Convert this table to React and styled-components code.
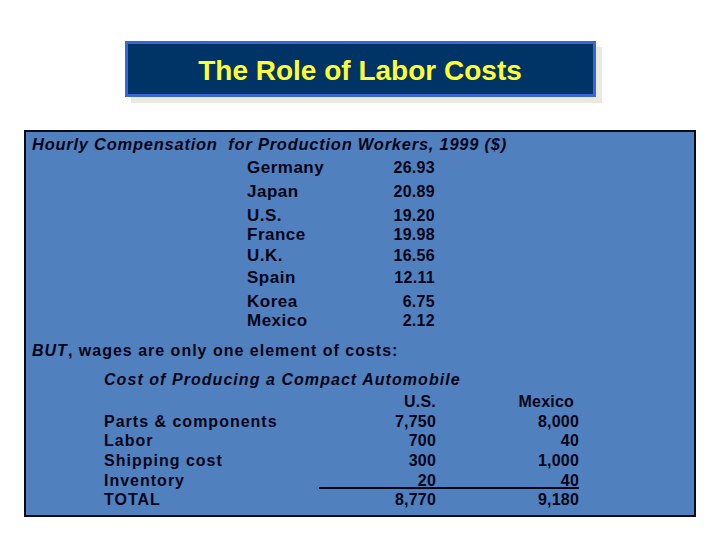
import React from "react";
import styled, { createGlobalStyle } from "styled-components";

const Global = createGlobalStyle`
  html, body { margin: 0; padding: 0; background: #ffffff; }
  body { font-family: "Liberation Sans", Arial, sans-serif; }
`;

const Page = styled.div`
  width: 720px;
  height: 540px;
  display: flex;
  flex-direction: column;
  align-items: center;
  padding-top: 41px;
  box-sizing: border-box;
`;

const TitleBox = styled.div`
  width: 471px;
  height: 56px;
  box-sizing: border-box;
  background: #003366;
  border: 3px solid #3a66d6;
  box-shadow: 6px 6px 0 #ebe9dc;
  display: flex;
  align-items: center;
  justify-content: center;
  padding-top: 3px;
`;

const Title = styled.h1`
  margin: 0;
  color: #ffff33;
  font-size: 28px;
  font-weight: bold;
  font-family: "Liberation Sans", Arial, sans-serif;
  line-height: 1;
`;

const Panel = styled.div`
  margin-top: 33px;
  width: 672px;
  height: 387px;
  box-sizing: border-box;
  background: #5080be;
  border: 2px solid #0a0a1a;
  padding: 2px 6px 0 6px;
  color: #050518;
  font-size: 16px;
  font-weight: bold;
  display: flex;
  flex-direction: column;
`;

const Line = styled.div`
  line-height: 20px;
  height: 20px;
  margin-top: ${(p) => (p.$pitch ? p.$pitch - 20 : 0)}px;
  padding-left: ${(p) => p.$indent || 0}px;
  font-style: ${(p) => (p.$italic ? "italic" : "normal")};
  font-size: ${(p) => p.$size || 16}px;
  letter-spacing: ${(p) => p.$ls ?? 0.6}px;
  white-space: nowrap;
`;

const CountryRow = styled.div`
  display: grid;
  grid-template-columns: 215px 120px 68px;
  line-height: 20px;
  height: 20px;
  margin-top: ${(p) => p.$pitch - 20}px;
`;

const Label = styled.span`
  grid-column: ${(p) => p.$col || 2};
  font-size: 17px;
  letter-spacing: ${(p) => p.$ls ?? 0.5}px;
  white-space: nowrap;
`;

const Num = styled.span`
  grid-column: ${(p) => p.$col};
  text-align: right;
  letter-spacing: 0.3px;
  padding-right: ${(p) => p.$pr || 0}px;
`;

const CostRow = styled.div`
  display: grid;
  grid-template-columns: 215px 117px 143px;
  padding-left: 72px;
  line-height: 20px;
  margin-top: ${(p) => p.$pitch - 20}px;
`;

const CostCell = styled.span`
  text-align: ${(p) => (p.$num ? "right" : "left")};
  letter-spacing: ${(p) => (p.$num ? 0.2 : 1)}px;
  white-space: nowrap;
  padding-right: ${(p) => p.$pr || 0}px;
  padding-top: ${(p) => (p.$total ? (p.$num ? 1 : 3) : 0)}px;
  border-top: ${(p) => (p.$total && p.$num ? "2px solid #050518" : "none")};
`;

const countries = [
  ["Germany", "26.93", 24],
  ["Japan", "20.89", 24],
  ["U.S.", "19.20", 24],
  ["France", "19.98", 19],
  ["U.K.", "16.56", 21],
  ["Spain", "12.11", 22],
  ["Korea", "6.75", 24],
  ["Mexico", "2.12", 19],
];

const costs = [
  ["Parts & components", "7,750", "8,000", 20],
  ["Labor", "700", "40", 19],
  ["Shipping cost", "300", "1,000", 20],
  ["Inventory", "20", "40", 20],
];

export default function App() {
  return (
    <>
      <Global />
      <Page>
        <TitleBox>
          <Title>The Role of Labor Costs</Title>
        </TitleBox>
        <Panel>
          <Line $italic $size={16.5} $ls={0.75}>
            Hourly Compensation&nbsp; for Production Workers, 1999 ($)
          </Line>
          {countries.map(([c, v, p]) => (
            <CountryRow key={c} $pitch={p}>
              <Label $col={2}>{c}</Label>
              <Num $col={3}>{v}</Num>
            </CountryRow>
          ))}
          <Line $pitch={30} $ls={1}>
            <i>BUT</i>, wages are only one element of costs:
          </Line>
          <Line $pitch={29} $indent={72} $italic $ls={1.05}>
            Cost of Producing a Compact Automobile
          </Line>
          <CostRow $pitch={22}>
            <CostCell />
            <CostCell $num>U.S.</CostCell>
            <CostCell $num $pr={5}>Mexico</CostCell>
          </CostRow>
          {costs.map(([l, a, b, p]) => (
            <CostRow key={l} $pitch={p}>
              <CostCell>{l}</CostCell>
              <CostCell $num>{a}</CostCell>
              <CostCell $num>{b}</CostCell>
            </CostRow>
          ))}
          <CostRow $pitch={16}>
            <CostCell $total>TOTAL</CostCell>
            <CostCell $total $num>8,770</CostCell>
            <CostCell $total $num>9,180</CostCell>
          </CostRow>
        </Panel>
      </Page>
    </>
  );
}
